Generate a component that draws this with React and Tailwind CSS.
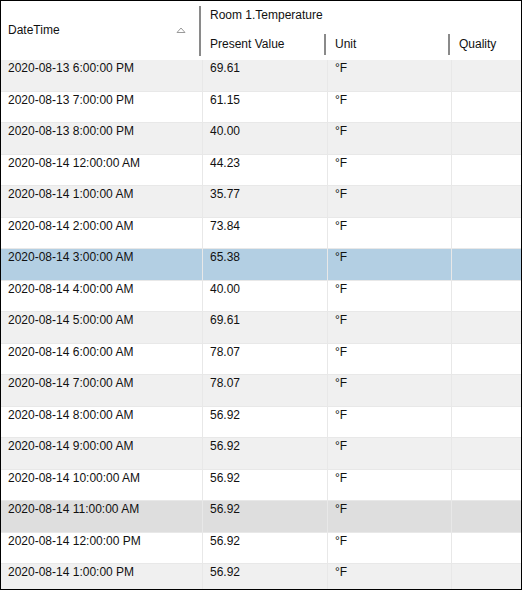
import React from "react";

const rows = [
  ["2020-08-13 6:00:00 PM", "69.61"],
  ["2020-08-13 7:00:00 PM", "61.15"],
  ["2020-08-13 8:00:00 PM", "40.00"],
  ["2020-08-14 12:00:00 AM", "44.23"],
  ["2020-08-14 1:00:00 AM", "35.77"],
  ["2020-08-14 2:00:00 AM", "73.84"],
  ["2020-08-14 3:00:00 AM", "65.38"],
  ["2020-08-14 4:00:00 AM", "40.00"],
  ["2020-08-14 5:00:00 AM", "69.61"],
  ["2020-08-14 6:00:00 AM", "78.07"],
  ["2020-08-14 7:00:00 AM", "78.07"],
  ["2020-08-14 8:00:00 AM", "56.92"],
  ["2020-08-14 9:00:00 AM", "56.92"],
  ["2020-08-14 10:00:00 AM", "56.92"],
  ["2020-08-14 11:00:00 AM", "56.92"],
  ["2020-08-14 12:00:00 PM", "56.92"],
  ["2020-08-14 1:00:00 PM", "56.92"],
];

function rowBg(i) {
  if (i === 6) return "bg-[#b3cfe3]";
  if (i === 14) return "bg-[#dedede]";
  return i % 2 === 0 ? "bg-[#f0f0f0]" : "bg-white";
}

export default function App() {
  return (
    <div
      className="w-[522px] h-[590px] border border-black bg-white overflow-hidden text-[12px] leading-[16px] text-[#111]"
      style={{ fontFamily: '"Liberation Sans", Arial, sans-serif' }}
    >
      {/* Header */}
      <div className="flex h-[59px]">
        <div className="w-[202px] shrink-0 flex items-center pl-[7px]">
          <span className="flex-1 mt-[-1px]">DateTime</span>
          <svg width="10" height="6" viewBox="0 0 10 6" className="mr-[13px] mt-[-2px]">
            <path d="M1 5.5 L5 1 L9 5.5 Z" fill="none" stroke="#9a9a9a" strokeWidth="1" />
          </svg>
          <div className="w-[2px] h-[50px] bg-[#8a8a8a]" />
          <div className="w-[2px]" />
        </div>
        <div className="flex-1 flex flex-col">
          <div className="h-[28px] flex items-center pl-[7px]">Room 1.Temperature</div>
          <div className="h-[31px] flex">
            <div className="w-[125px] shrink-0 flex items-center pl-[7px]">
              <span className="flex-1 mt-[-1px]">Present Value</span>
              <div className="w-[2px] h-[21px] bg-[#8a8a8a]" />
              <div className="w-[2px]" />
            </div>
            <div className="w-[124px] shrink-0 flex items-center pl-[7px]">
              <span className="flex-1 mt-[-1px]">Unit</span>
              <div className="w-[2px] h-[21px] bg-[#8a8a8a]" />
              <div className="w-[2px]" />
            </div>
            <div className="flex-1 flex items-center pl-[7px]">
              <span className="mt-[-1px]">Quality</span>
            </div>
          </div>
        </div>
      </div>
      {/* Body */}
      <div className="flex flex-col">
        {rows.map((r, i) => (
          <div
            key={i}
            className={`flex h-[31.5px] shrink-0 border-b border-[#e8e8e8] ${rowBg(i)}`}
          >
            <div className="w-[202px] shrink-0 border-r border-[#e8e8e8] pl-[7px]">{r[0]}</div>
            <div className="w-[125px] shrink-0 border-r border-[#e8e8e8] pl-[7px]">{r[1]}</div>
            <div className="w-[124px] shrink-0 border-r border-[#e8e8e8] pl-[7px]">°F</div>
            <div className="flex-1" />
          </div>
        ))}
      </div>
    </div>
  );
}
